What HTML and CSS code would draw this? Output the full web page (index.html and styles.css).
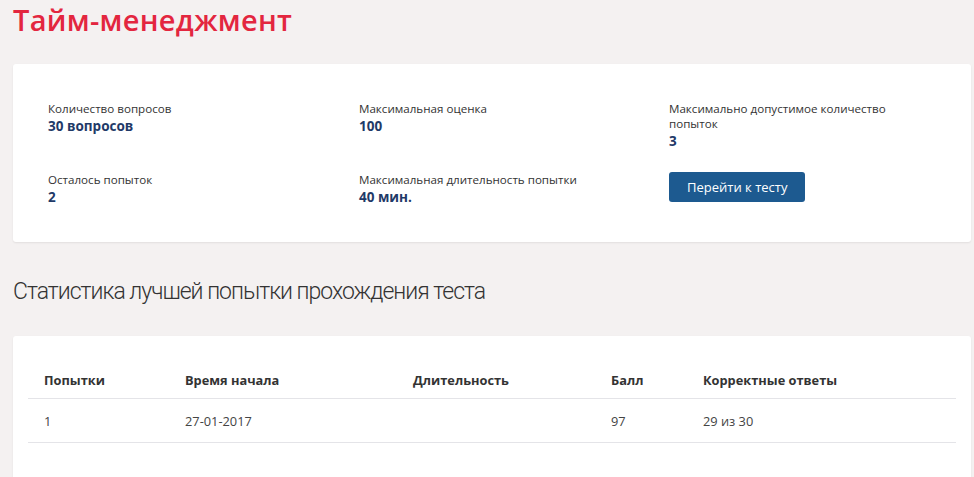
FILE: index.html
```html
<!DOCTYPE html>
<html lang="ru">
<head>
<meta charset="utf-8" />
<title>Тайм-менеджмент</title>
<link rel="stylesheet" href="styles.css">
</head>
<body>
<div class="page">
	<h1 class="page-title">Тайм-менеджмент</h1>

	<div class="card test-info">
		<div class="info-grid">
			<div class="info-item">
				<div class="info-label">Количество вопросов</div>
				<div class="info-value">30 вопросов</div>
			</div>
			<div class="info-item">
				<div class="info-label">Максимальная оценка</div>
				<div class="info-value">100</div>
			</div>
			<div class="info-item">
				<div class="info-label">Максимально допустимое количество попыток</div>
				<div class="info-value">3</div>
			</div>
			<div class="info-item">
				<div class="info-label">Осталось попыток</div>
				<div class="info-value">2</div>
			</div>
			<div class="info-item">
				<div class="info-label">Максимальная длительность попытки</div>
				<div class="info-value">40 мин.</div>
			</div>
			<div class="info-item">
				<a class="btn-primary" href="#">Перейти к тесту</a>
			</div>
		</div>
	</div>

	<h2 class="section-title">Статистика лучшей попытки прохождения теста</h2>

	<div class="card stats">
		<table class="stats-table">
			<thead>
				<tr>
					<th class="col-try">Попытки</th>
					<th class="col-start">Время начала</th>
					<th class="col-dur">Длительность</th>
					<th class="col-score">Балл</th>
					<th>Корректные ответы</th>
				</tr>
			</thead>
			<tbody>
				<tr>
					<td>1</td>
					<td>27-01-2017</td>
					<td></td>
					<td>97</td>
					<td>29 из 30</td>
				</tr>
			</tbody>
		</table>
	</div>
</div>
</body>
</html>
```

FILE: styles.css
```css
*{margin:0;padding:0;box-sizing:border-box;}
html,body{background:#f4f1f1;}
body{font-family:"Open Sans","Noto Sans",sans-serif;color:#333;overflow:hidden;}
.page{padding:0 3px 0 13px;}

.page-title{font-size:29px;font-weight:600;color:#e3263f;line-height:40px;height:64px;letter-spacing:0.3px;}

.card{background:#fff;border-radius:3px;box-shadow:0 1px 2px rgba(0,0,0,.08);}

.test-info{height:178px;padding:37px 35px 0 35px;}
.info-grid{display:grid;grid-template-columns:311px 310px 250px;row-gap:21px;}
.info-label{font-size:11.6px;line-height:15px;color:#333;}
.info-value{font-size:13.5px;line-height:20px;font-weight:700;color:#1f3a68;}

.btn-primary{display:inline-block;height:30px;line-height:30px;padding:0 18px;background:#1d5a90;color:#fff;font-size:13px;text-decoration:none;border-radius:3px;}

.section-title{font-family:Roboto,"Noto Sans",sans-serif;font-weight:300;font-size:23px;letter-spacing:-1px;color:#333;line-height:28px;margin:36px 0 30px 0;}

.stats{height:160px;padding:26px 15px 0 15px;}
.stats-table{width:100%;border-collapse:collapse;font-size:12.8px;}
.stats-table th{text-align:left;font-weight:700;padding:8px 16px 8px 16px;line-height:20px;border-bottom:1px solid #e4e4e8;}
.stats-table td{text-align:left;padding:12px 16px 11px 16px;line-height:20px;border-bottom:1px solid #e4e4e8;color:#444;}
.col-try{width:141px;}
.col-start{width:228px;}
.col-dur{width:198px;}
.col-score{width:92px;}
```
